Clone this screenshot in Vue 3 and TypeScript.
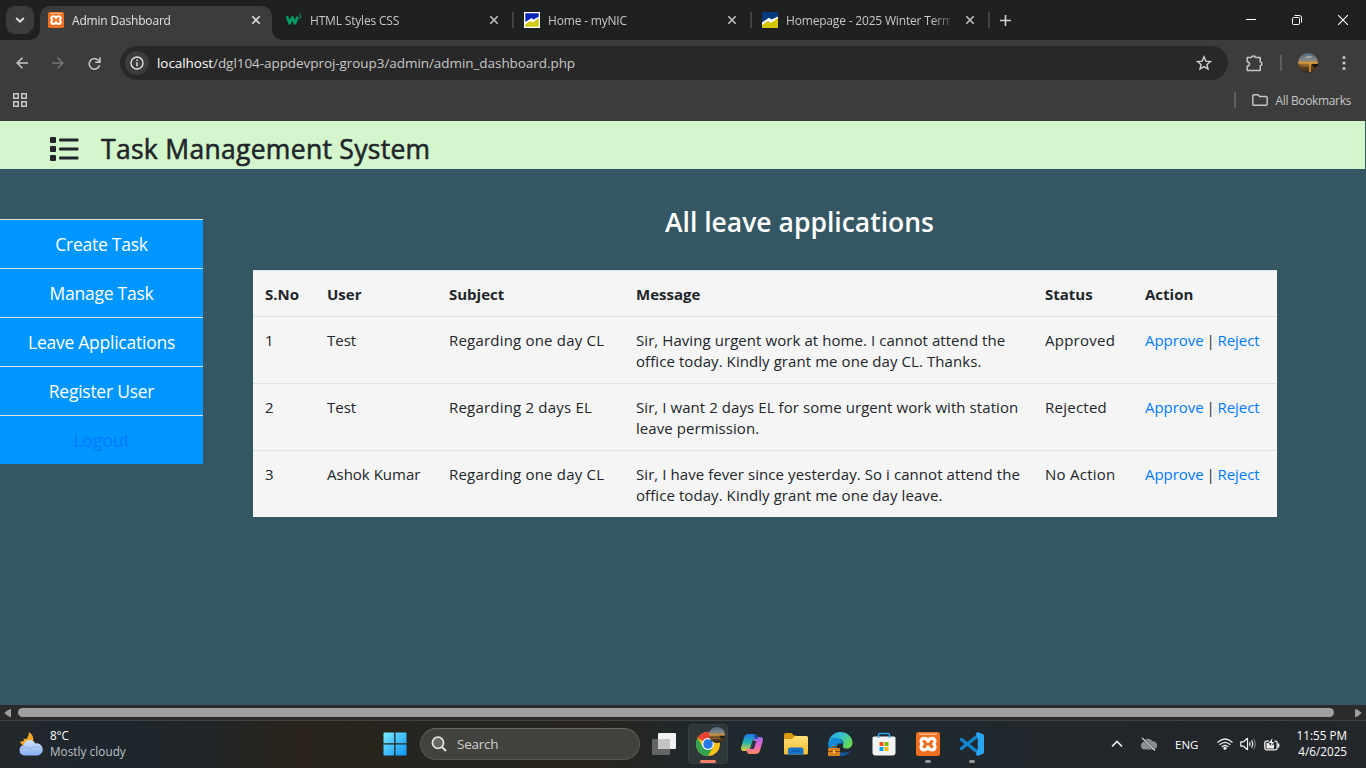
<script setup lang="ts">
interface Tab { title: string; icon: 'xampp' | 'w3' | 'nic' | 'nic2'; active?: boolean }
interface Leave { no: number; user: string; subject: string; message: string; status: string }

const tabs: Tab[] = [
  { title: 'Admin Dashboard', icon: 'xampp', active: true },
  { title: 'HTML Styles CSS', icon: 'w3' },
  { title: 'Home - myNIC', icon: 'nic' },
  { title: 'Homepage - 2025 Winter Term', icon: 'nic2' },
]

const menu: string[] = ['Create Task', 'Manage Task', 'Leave Applications', 'Register User', 'Logout']
const columns: string[] = ['S.No', 'User', 'Subject', 'Message', 'Status', 'Action']

const leaves: Leave[] = [
  { no: 1, user: 'Test', subject: 'Regarding one day CL', message: 'Sir, Having urgent work at home. I cannot attend the\noffice today. Kindly grant me one day CL. Thanks.', status: 'Approved' },
  { no: 2, user: 'Test', subject: 'Regarding 2 days EL', message: 'Sir, I want 2 days EL for some urgent work with station\nleave permission.', status: 'Rejected' },
  { no: 3, user: 'Ashok Kumar', subject: 'Regarding one day CL', message: 'Sir, I have fever since yesterday. So i cannot attend the\noffice today. Kindly grant me one day leave.', status: 'No Action' },
]
</script>

<template>
  <div class="screen">
    <svg class="defs" width="0" height="0" aria-hidden="true">
      <defs>
        <linearGradient id="sky" x1="0" y1="0" x2="0" y2="1">
          <stop offset="0" stop-color="#4d6784" /><stop offset=".38" stop-color="#8b8a80" />
          <stop offset=".5" stop-color="#c98f3e" /><stop offset=".62" stop-color="#6b4a22" />
          <stop offset="1" stop-color="#33291f" />
        </linearGradient>
        <linearGradient id="win" x1="0" y1="0" x2="1" y2="1">
          <stop offset="0" stop-color="#7cebff" /><stop offset="1" stop-color="#0a94f5" />
        </linearGradient>
        <linearGradient id="cloud" x1="0" y1="0" x2="0" y2="1">
          <stop offset="0" stop-color="#d3e4fb" /><stop offset="1" stop-color="#86aef0" />
        </linearGradient>
        <linearGradient id="copA" x1="0" y1="0" x2="0" y2="1">
          <stop offset="0" stop-color="#1b78e8" /><stop offset=".5" stop-color="#25b5b0" /><stop offset="1" stop-color="#e5d22f" />
        </linearGradient>
        <linearGradient id="copB" x1="0" y1="0" x2="0" y2="1">
          <stop offset="0" stop-color="#9b6cf0" /><stop offset=".5" stop-color="#e565c4" /><stop offset="1" stop-color="#ff8a5c" />
        </linearGradient>
        <linearGradient id="folder" x1="0" y1="0" x2="0" y2="1">
          <stop offset="0" stop-color="#ffdf7a" /><stop offset="1" stop-color="#f8bd2c" />
        </linearGradient>
        <linearGradient id="edge" x1="0" y1="0" x2="1" y2=".5">
          <stop offset="0" stop-color="#1b9fe2" /><stop offset=".5" stop-color="#35c1d4" /><stop offset="1" stop-color="#62d957" />
        </linearGradient>
        <symbol id="i-xampp" viewBox="0 0 24 24">
          <rect width="24" height="24" rx="2.500" fill="#ee6f1d" />
          <path d="M3 2.200h18" stroke="#f9b184" stroke-width="1.600" />
          <path d="M12 9.300C11 5.400 5 5.400 5 9.200c0 1.600.5 2.100 1.300 2.800C5.500 12.700 5 13.300 5 14.900c0 3.900 6 3.900 7 0 1 3.900 7 3.900 7 0 0-1.600-.5-2.200-1.300-2.900.8-.7 1.300-1.200 1.300-2.800 0-3.800-6-3.800-7 .1z" fill="none" stroke="#fff" stroke-width="3.100" stroke-linejoin="round" />
        </symbol>
      </defs>
    </svg>

    <div class="tabstrip">
      <div class="tabsearch">
        <svg width="10" height="6" viewBox="0 0 10 6"><path d="M1.200 1 5 4.700 8.800 1" fill="none" stroke="#e3e3e3" stroke-width="1.900" /></svg>
      </div>
      <div v-for="t in tabs" :key="t.title" class="tab" :class="{ active: t.active, divided: t.icon === 'nic' || t.icon === 'nic2' }">
        <svg v-if="t.icon === 'xampp'" class="fav" viewBox="0 0 24 24"><use href="#i-xampp" /></svg>
        <svg v-else-if="t.icon === 'w3'" class="fav" viewBox="0 0 16 16">
          <path d="M.8 4.200 3.600 11.300 6.300 5.400 9 11.300 11.700 4.800" fill="none" stroke="#059862" stroke-width="2.800" stroke-linejoin="round" />
          <path d="M12.800 2.700H15L13.900 4.200q1.400.2 1.100 1.300-.6 1-2.200.5" fill="none" stroke="#059862" stroke-width=".8" />
        </svg>
        <svg v-else class="fav" viewBox="0 0 16 16">
          <rect width="16" height="16" fill="#fff" />
          <template v-if="t.icon === 'nic'">
            <path d="M1.300 1.300h13.400v3.500L9.500 7.500 7.500 6 1.300 10z" fill="#0524b8" />
            <path d="M1.300 14.700V12.500L6 9l3 1.500L14.700 6v8.700z" fill="#cccc14" />
          </template>
          <template v-else>
            <path d="M0 0h16v4.500L9.500 7.500 7 5.800 0 10.500z" fill="#073b80" />
            <path d="M0 16v-3L6 9l3 2 7-5v10z" fill="#d3c600" />
          </template>
        </svg>
        <span class="tab-title">{{ t.title }}</span>
        <svg class="close" width="10" height="10" viewBox="0 0 10 10"><path d="M1.300 1.300l7.400 7.400M8.700 1.300 1.300 8.700" stroke="#dcdcdc" stroke-width="1.600" /></svg>
      </div>
      <div class="newtab">
        <svg width="11" height="11" viewBox="0 0 11 11"><path d="M5.500 0v11M0 5.500h11" stroke="#d0d0d0" stroke-width="1.600" /></svg>
      </div>
      <div class="winbtns">
        <svg width="10" height="10" viewBox="0 0 10 10"><path d="M0 4.500h10" stroke="#fff" /></svg>
        <svg width="10" height="10" viewBox="0 0 10 10"><rect x=".5" y="2.500" width="7" height="7" rx="1" fill="none" stroke="#fff" /><path d="M2.500.5H7.500a2 2 0 0 1 2 2V7.500" fill="none" stroke="#fff" /></svg>
        <svg width="10" height="10" viewBox="0 0 10 10"><path d="M0 0l10 10M10 0 0 10" stroke="#fff" stroke-width="1.100" /></svg>
      </div>
    </div>

    <div class="toolbar">
      <svg class="nav" width="12" height="12" viewBox="0 0 12 12"><path d="M12 6H1.200M6.400.8 1.200 6l5.200 5.200" fill="none" stroke="#c7c7c7" stroke-width="1.600" /></svg>
      <svg class="nav" width="12" height="12" viewBox="0 0 12 12"><path d="M0 6h10.800M5.600.8 10.800 6l-5.200 5.200" fill="none" stroke="#767676" stroke-width="1.600" /></svg>
      <svg class="nav reload" width="13" height="13" viewBox="0 0 13 13"><path d="M11.300 4.600A5.300 5.300 0 1 0 11.600 8.300" fill="none" stroke="#c7c7c7" stroke-width="1.600" /><path d="M12 .4v4.800H7.200" fill="none" stroke="#c7c7c7" stroke-width="1.600" /></svg>
      <div class="omnibox">
        <div class="info">
          <svg width="14" height="14" viewBox="0 0 14 14"><circle cx="7" cy="7" r="6" fill="none" stroke="#e0e0e0" stroke-width="1.400" /><path d="M7 6.200v4M7 3.600v1.400" stroke="#e0e0e0" stroke-width="1.500" /></svg>
        </div>
        <span class="url"><b>localhost</b>/dgl104-appdevproj-group3/admin/admin_dashboard.php</span>
        <svg class="star" width="16" height="16" viewBox="0 0 16 16"><path d="M8 1.800l1.800 4.300 4.700.4-3.600 3 1.100 4.600L8 11.600l-4 2.500 1.100-4.600-3.600-3 4.700-.4z" fill="none" stroke="#d0d0d0" stroke-width="1.400" /></svg>
      </div>
      <svg class="puzzle" width="17" height="17" viewBox="0 0 17 17"><path d="M1.200 2.500H5.500Q5.700 1 7.500 1T9.500 2.500H14.200V7q1.800.2 1.800 1.900T14.200 10.800V15.500H1.200V11.300Q3.500 11 3.500 9T1.200 6.700z" fill="none" stroke="#c7c7c7" stroke-width="1.500" stroke-linejoin="round" /></svg>
      <i class="bar"></i>
      <svg class="avatar" width="20" height="20" viewBox="0 0 20 20"><circle cx="10" cy="10" r="10" fill="url(#sky)" /><path d="M6 4.500l5-2 4 1-4 2z" fill="#b4b8ba" opacity=".7" /><path d="M1 9.500h18v.8H1z" fill="#eea33e" /><path d="M3 12.500h8v.7H3z" fill="#c98a35" /><path d="M12 10v9" stroke="#f0a233" stroke-width="1.400" /><path d="M13.500 11H20v2l-4 2z" fill="#171714" /></svg>
      <svg class="dots" width="4" height="16" viewBox="0 0 4 16"><g fill="#c7c7c7"><circle cx="2" cy="2.500" r="1.600" /><circle cx="2" cy="8" r="1.600" /><circle cx="2" cy="13.500" r="1.600" /></g></svg>
    </div>

    <div class="bookmarks">
      <svg width="14" height="14" viewBox="0 0 14 14"><g fill="none" stroke="#c7c7c7" stroke-width="1.500"><rect x=".75" y=".75" width="4.500" height="4.500" /><rect x="8.750" y=".75" width="4.500" height="4.500" /><rect x=".75" y="8.750" width="4.500" height="4.500" /><rect x="8.750" y="8.750" width="4.500" height="4.500" /></g></svg>
      <i class="bar"></i>
      <svg width="16" height="12" viewBox="0 0 16 12"><path d="M.8 10V2Q.8.7 2 .7H6L7.700 2.500H14q1.200 0 1.200 1.200V10q0 1.300-1.200 1.300H2Q.8 11.300.8 10z" fill="none" stroke="#c7c7c7" stroke-width="1.400" /></svg>
      <span>All Bookmarks</span>
    </div>

    <main class="page">
      <header class="banner">
        <svg width="29" height="24" viewBox="0 0 29 24"><g fill="#212529"><rect y="0" width="6" height="6" rx="1" /><rect y="9" width="6" height="6" rx="1" /><rect y="18" width="6" height="6" rx="1" /><rect x="9" y="1.500" width="19.500" height="3" rx="1" /><rect x="9" y="10.500" width="19.500" height="3" rx="1" /><rect x="9" y="19.500" width="19.500" height="3" rx="1" /></g></svg>
        <h3>Task Management System</h3>
      </header>
      <div class="body">
        <nav class="sidebar">
          <a v-for="m in menu" :key="m" :class="{ logout: m === 'Logout' }">{{ m }}</a>
        </nav>
        <section class="content">
          <h3>All leave applications</h3>
          <table>
            <colgroup><col v-for="(c, i) in columns" :key="c" :class="'c' + i" /></colgroup>
            <thead><tr><th v-for="c in columns" :key="c">{{ c }}</th></tr></thead>
            <tbody>
              <tr v-for="l in leaves" :key="l.no">
                <td>{{ l.no }}</td><td>{{ l.user }}</td><td class="subject">{{ l.subject }}</td>
                <td class="message">{{ l.message }}</td><td class="status">{{ l.status }}</td>
                <td class="actions"><a>Approve</a> | <a>Reject</a></td>
              </tr>
            </tbody>
          </table>
        </section>
      </div>
    </main>

    <div class="hscroll">
      <svg width="8" height="10" viewBox="0 0 8 10"><path d="M7 .8v8.400Q3 8 .3 5 3 2 7 .8z" fill="#9f9f9f" /></svg>
      <div class="thumb"></div>
      <svg width="8" height="10" viewBox="0 0 8 10"><path d="M1 .8v8.400Q5 8 7.700 5 5 2 1 .8z" fill="#9f9f9f" /></svg>
    </div>

    <footer class="taskbar">
      <div class="weather">
        <svg width="26" height="26" viewBox="0 0 26 26"><path d="M11 1q5.500 3.500 4 9.500L8 15Q3.500 14.500 1.500 10.500 4 11 6 9.500L5.500 7.500 8.500 8Q11 5 11 1z" fill="#f5a623" /><path d="M6.500 24.500a5.300 5.300 0 0 1-.6-10.500 6 6 0 0 1 11.400-1.500A6 6 0 0 1 20 24.500z" fill="url(#cloud)" /><path d="M3 18q6-4 10 0 4-4 10-1" fill="none" stroke="#6d9be8" stroke-width=".8" opacity=".6" /></svg>
        <div><b>8°C</b><span>Mostly cloudy</span></div>
      </div>
      <div class="apps">
        <svg class="start" width="24" height="24" viewBox="0 0 24 24"><path d="M1.500.5H11.200V11.200H.5V1.500q0-1 1-1zM12.500.5h10q1 0 1 1v9.700H12.500zM.5 12.500H11.200V23.500H1.500q-1 0-1-1zM12.500 12.500h11v10q0 1-1 1H12.500z" fill="url(#win)" /></svg>
        <div class="search">
          <svg width="16" height="16" viewBox="0 0 16 16"><circle cx="7" cy="6.800" r="5.600" fill="#666762" stroke="#e4e4e4" stroke-width="1.700" /><path d="M11 11l4 4" stroke="#e4e4e4" stroke-width="1.900" /></svg>
          <span>Search</span>
        </div>
        <div class="app"><svg width="24" height="22" viewBox="0 0 24 22"><rect x="6" width="18" height="16" rx="1" fill="#f1f1f1" /><rect y="6" width="18" height="16" rx="1" fill="#767676" opacity=".8" /><path d="M6 6h12v10H6z" fill="#c4c4c4" /></svg></div>
        <div class="app current">
          <svg class="chrome" width="24" height="24" viewBox="0 0 24 24"><circle cx="12" cy="12" r="12" fill="#fbc116" /><path d="M12 12 1.600 6A12 12 0 0 1 22.400 6H12z" fill="#e94235" /><path d="M1.600 6A12 12 0 0 0 12 24l5.200-9L12 12 7 15z" fill="#32a350" /><path d="M12 6.200h10.500" stroke="#e94235" stroke-width="1" /><circle cx="12" cy="12" r="6" fill="#fff" /><circle cx="12" cy="12" r="4.800" fill="#2b78eb" /></svg>
          <svg class="mini" width="16" height="16" viewBox="0 0 20 20"><circle cx="10" cy="10" r="10" fill="url(#sky)" /><path d="M1 9.500h18v.8H1z" fill="#d99a42" /><path d="M2 14h12v1H2z" fill="#9a7037" /><path d="M13 11h7v2l-4 2z" fill="#1d1b17" /></svg>
          <i></i>
        </div>
        <div class="app"><svg width="24" height="24" viewBox="0 0 24 24"><path d="M8.500 2h6Q16.500 2 17.200 4.500L18 7h-2.500Q13 7 12 10l-2.200 7.500Q9.300 19 7.500 19H3.500Q.4 19 1.200 15L4 5.500Q5 2 8.500 2z" fill="url(#copA)" /><path d="M15.500 22h-6Q7.500 22 6.800 19.500L6 17h2.500Q11 17 12 14l2.200-7.500Q14.700 5 16.500 5H20.500q3.100 0 2.300 4L20 18.500Q19 22 15.500 22z" fill="url(#copB)" /><path d="M14.500 2Q16.500 2 17.200 4.500L18 7H15l-1-3z" fill="#1c48b5" /><path d="M13.400 9h3l-2 6.500q-.4 1.500-1.800 1.500h-3Q11.200 16.500 12 14z" fill="#263343" /></svg></div>
        <div class="app"><svg width="24" height="22" viewBox="0 0 24 22"><path d="M0 2Q0 0 2 0H7.500L10 2.500H12V8H0z" fill="#d9980d" /><path d="M0 6H8L11 3H22.500Q24 3 24 4.500V20q0 1.500-1.500 1.500H1.500Q0 21.500 0 20z" fill="url(#folder)" /><path d="M4 21.500V17q0-2.500 2.500-2.500H17q2.500 0 2.500 2.500v4.500z" fill="#1673ca" /><path d="M7.500 18h8.500" stroke="#0e5ca8" stroke-width="1.500" /></svg></div>
        <div class="app"><svg width="25" height="24" viewBox="0 0 25 24"><path d="M.3 13A12 12 0 0 1 12.300 0C19 0 24.500 5 24.500 10.500c0 4-2.500 6-5.500 6-3.500 0-5-1.500-4-3.500C17 8.500 12 6 8 7.500 3 9 1 12 .3 13z" fill="url(#edge)" /><path d="M.3 12C1.500 6.500 6 5 9.500 6c4 .8 6 4 5 6.500-1.500-2-5-1.500-5.800 1.500C8 18 11 21 15 21.500L12 24C5 24 0 19 .3 12z" fill="#1289d6" /><path d="M9 12.500c-2 5.500 3.500 11 13.500 6.500-3 4-7.500 5.500-11.500 4.800C6.500 22 5.500 16.500 9 12.500z" fill="#115aa8" /><rect y="16" width="12" height="8" rx="1" fill="#d9821b" /><path d="M4 16v-1.500h4V16M0 19.500h12" stroke="#8a4508" fill="none" /><rect x="5" y="18.500" width="2" height="2.500" fill="#ffd15c" /></svg></div>
        <div class="app"><svg width="24" height="24" viewBox="0 0 24 24"><path d="M6.500 6V3q0-1.500 1.500-1.500h8q1.500 0 1.500 1.500v3" fill="none" stroke="#28a5e6" stroke-width="1.500" /><path d="M.5 6Q.5 4.500 2 4.500H22q1.500 0 1.500 1.500V20.500q0 3-3 3H3.500q-3 0-3-3z" fill="#f3f3f3" /><path d="M6.500 4.500V6M17.500 4.500V6" stroke="#28a5e6" stroke-width="1.500" /><path d="M7.500 10H11.500v4H7.500z" fill="#f25022" /><path d="M12.500 10H16.500v4H12.500z" fill="#7fba00" /><path d="M7.500 15H11.500v4H7.500z" fill="#00a4ef" /><path d="M12.500 15H16.500v4H12.500z" fill="#ffb900" /></svg></div>
        <div class="app open"><svg width="24" height="24" viewBox="0 0 24 24"><use href="#i-xampp" /></svg><i></i></div>
        <div class="app open"><svg width="24" height="24" viewBox="0 0 24 24"><path d="M1.500 7.500 17.500 20M1.500 16.500 17.500 4" stroke="#1384cf" stroke-width="3.300" stroke-linecap="round" /><path d="M17.500 0 24 2.700V21.300L17.500 24 16 22.500l1.500-5V6.500L16 1.500z" fill="#2aa4f4" /><path d="M17.500 6.500v11L10.500 12z" fill="#22282e" /></svg><i></i></div>
      </div>
      <div class="tray">
        <svg class="up" width="12" height="8" viewBox="0 0 12 8"><path d="M1 6.500 6 1.500l5 5" fill="none" stroke="#f2f2f2" stroke-width="1.600" /></svg>
        <svg class="onedrive" width="17" height="14" viewBox="0 0 17 14"><path d="M4 12.500A4 4 0 0 1 3.500 4.800 5 5 0 0 1 12.500 4.300 4.100 4.100 0 0 1 13.500 12.500z" fill="#8b8d8f" /><path d="M2 .8 15 13.500" stroke="#23272b" stroke-width="2" /><path d="M2 .8 15 13.500" stroke="#e8e8e8" stroke-width="1.100" /></svg>
        <span class="lang">ENG</span>
        <svg class="wifi" width="16" height="12" viewBox="0 0 16 12"><g fill="none" stroke="#f2f2f2" stroke-width="1.200"><path d="M.5 4.500Q8-2.500 15.500 4.500M2.600 6.800Q8 1.800 13.400 6.800M4.800 9Q8 6 11.200 9" /></g><circle cx="8" cy="10.300" r="1.500" fill="#f2f2f2" /></svg>
        <svg class="sound" width="17" height="14" viewBox="0 0 17 14"><path d="M.8 4.800H3.500L7.500 1.300v11.400L3.500 9.200H.8z" fill="none" stroke="#f2f2f2" stroke-width="1.200" stroke-linejoin="round" /><path d="M9.500 5q1.200 2 0 4M11.500 3.300q2.400 3.700 0 7.400" fill="none" stroke="#f2f2f2" stroke-width="1.200" /><path d="M13.500 1.500q3.600 5.500 0 11" fill="none" stroke="#77797b" stroke-width="1.200" /></svg>
        <svg class="battery" width="16" height="13" viewBox="0 0 16 13"><path d="M5 3.200H2.500Q.8 3.200.8 5v5q0 1.800 1.700 1.800h9Q13.200 11.800 13.200 10V5q0-1.800-1.700-1.800H10.500M14.700 5.500v4" fill="none" stroke="#f2f2f2" stroke-width="1.300" /><path d="M2.500 5H5l1 2.500h2L10 6v4.500H2.500z" fill="#f2f2f2" /><path d="M8.500 0 4.700 5h2.800L6 9l4.300-5H7.800z" fill="#f2f2f2" /></svg>
        <div class="clock"><span>11:55 PM</span><span>4/6/2025</span></div>
      </div>
    </footer>
  </div>
</template>

<style>
html, body { margin: 0; overflow: hidden; background: #202120; }
</style>

<style scoped>
* { box-sizing: border-box; }
.screen { width: 1366px; height: 768px; display: flex; flex-direction: column; overflow: hidden; font-family: "Open Sans", "Noto Sans", sans-serif; white-space: nowrap; background: #3c3c3c; }
svg { display: block; flex: none; }
.defs { position: absolute; }

.tabstrip { height: 40px; flex: none; display: flex; background: #1f2120; padding-left: 6px; }
.tabsearch { width: 28px; height: 28px; margin: 6px 6px 0 0; border-radius: 9px; background: #3c3c3c; display: flex; align-items: center; justify-content: center; }
.tab { width: 238px; height: 34px; margin-top: 6px; padding: 0 11px 6px 14px; display: flex; align-items: center; position: relative; font-size: 12px; color: #c7c7c7; }
.tab.active { width: 232px; padding: 0 11px 6px 8px; background: #3c3c3c; border-radius: 10px 10px 0 0; color: #e3e3e3; }
.tab.active::before, .tab.active::after { content: ""; position: absolute; bottom: 0; width: 10px; height: 10px; }
.tab.active::before { left: -10px; background: radial-gradient(circle at 0 0, #1f2120 9.500px, #3c3c3c 10px); }
.tab.active::after { right: -10px; background: radial-gradient(circle at 100% 0, #1f2120 9.500px, #3c3c3c 10px); }
.tab.divided::before { content: ""; position: absolute; left: 2px; top: 6px; width: 2px; height: 16px; background: #414241; }
.fav { width: 16px; height: 16px; margin-right: 8px; }
.tab-title { flex: 1; min-width: 0; letter-spacing: -0.18px; mask-image: linear-gradient(90deg, #000 146px, transparent 170px); }
.close { margin-left: 14px; margin-right: 1px; }
.tab:not(.active) .close { opacity: .85; margin-right: 0; margin-left: 15px; }
.tab.active .close { margin-right: 0; }
.newtab { width: 60px; display: flex; align-items: center; position: relative; padding-left: 14px; }
.newtab::before { content: ""; position: absolute; left: 2px; top: 12px; width: 2px; height: 16px; background: #414241; }
.winbtns { margin-left: auto; padding-right: 18px; display: flex; align-items: center; gap: 36px; }

.toolbar { height: 46px; flex: none; display: flex; align-items: center; padding-left: 16px; background: #3c3c3c; }
.nav { margin-right: 24px; }
.nav.reload { margin-right: 19px; }
.omnibox { width: 1108px; height: 34px; border-radius: 17px; background: #282828; display: flex; align-items: center; padding: 0 16px 0 5px; }
.info { width: 24px; height: 24px; border-radius: 12px; background: #3c3c3c; display: flex; align-items: center; justify-content: center; }
.url { margin-left: 8px; font-size: 13.500px; letter-spacing: -0.06px; color: #c7c7c7; flex: 1; }
.url b { font-weight: 400; color: #fff; }
.puzzle { margin-left: 18px; }
.bar { width: 2px; height: 16px; background: #5e5e5e; }
.toolbar .bar { margin-left: 17px; }
.avatar { margin-left: 16px; }
.dots { margin-left: 24px; }

.bookmarks { height: 35px; flex: none; display: flex; align-items: center; padding: 0 15px 7px 13px; color: #c7c7c7; font-size: 12px; background: #3c3c3c; }
.bookmarks .bar { margin: 0 16px 0 auto; }
.bookmarks span { margin-left: 8px; letter-spacing: -0.35px; }

.page { height: 584px; flex: none; background: #355764; color: #212529; }
.banner { width: 1365px; height: 48px; display: flex; align-items: center; padding: 7px 0 0 50px; background: #d3f6cc; }
.banner h3 { margin: 2px 0 0 22px; font-size: 26.500px; line-height: 33px; font-weight: 400; letter-spacing: 0.3px; -webkit-text-stroke: 0.550px #212529; }
.body { display: flex; }
.sidebar { width: 203px; margin-top: 50px; background: #0096ff; height: 245px; }
.sidebar a { display: block; height: 49px; border-top: 1px solid #dee2e6; text-align: center; line-height: 49px; font-size: 17.500px; letter-spacing: -0.25px; color: #fff; }
.sidebar a.logout { color: #007bff; letter-spacing: 0; }
.content { width: 1024px; margin-left: 50px; padding-top: 36px; }
.content h3 { margin: 0 0 31px; padding-left: 69px; text-align: center; color: #fff; font-size: 26.500px; line-height: 34px; font-weight: 600; }
table { width: 1024px; table-layout: fixed; border-collapse: separate; border-spacing: 0; background: #f5f5f5; font-size: 15px; line-height: 21px; }
.c0 { width: 62px; } .c1 { width: 122px; } .c2 { width: 187px; } .c3 { width: 409px; } .c4 { width: 100px; } .c5 { width: 144px; }
th, td { border-top: 1px solid #dee2e6; padding: 13px 0 11px 12px; text-align: left; vertical-align: top; }
.subject { letter-spacing: 0.2px; }
.status { letter-spacing: 0.25px; }
.message { white-space: pre-line; letter-spacing: 0.070px; }
.actions { word-spacing: -1px; letter-spacing: -0.05px; }
.actions a { color: #007bff; }

.hscroll { height: 15px; flex: none; display: flex; align-items: center; justify-content: space-between; padding: 0 4px; background: #2b2b2b; }
.thumb { width: 1316px; height: 9px; border-radius: 5px; background: #9f9f9f; margin: 0 14px 0 0; }

.taskbar { height: 48px; flex: none; display: flex; align-items: center; position: relative; padding-bottom: 1px; border-top: 1px solid #414344; background: linear-gradient(90deg, #23272b 0, #1e272e 90px, #202528 200px, #2a241b 300px, #26251f 420px, #27251e 600px, #20282c 690px, #1f292f 850px, #22272b 1100px, #23262a 1366px); }
.weather { width: 382px; display: flex; align-items: center; padding-left: 18px; color: #fff; font-size: 11.700px; line-height: 16px; }
.weather div { margin: -2px 0 0 6px; display: flex; flex-direction: column; }
.weather b { font-weight: 400; letter-spacing: -0.1px; }
.weather span { color: #bfc2c4; letter-spacing: 0.07px; }
.apps { display: flex; align-items: center; }
.start { margin: 0 13px 0 1px; }
.search { width: 220px; height: 32px; border-radius: 16px; background: #42433f; border: 1px solid #555651; border-top-color: #666763; display: flex; align-items: center; padding: 0 0 1px 10px; margin-right: 2px; color: #cfcfcd; font-size: 13.500px; letter-spacing: -0.25px; }
.search span { margin-left: 10px; }
.app { width: 40px; height: 40px; margin: 0 2px; position: relative; display: flex; align-items: center; justify-content: center; border-radius: 4px; }
.app.current { background: #30373a; border: 1px solid #383f42; }
.mini { position: absolute; left: 20px; top: 2px; }
.app i { position: absolute; bottom: 1px; left: 17px; width: 6px; height: 3px; border-radius: 2px; background: #94989a; }
.app.current i { left: 11px; width: 16px; bottom: 0; background: #f47f68; }
.tray { margin-left: auto; display: flex; align-items: center; color: #fff; padding-right: 19px; }
.onedrive { margin-left: 17px; }
.lang { margin-left: 18px; font-size: 11.500px; width: 26px; }
.wifi { margin-left: 16px; }
.sound { margin-left: 7px; }
.battery { margin-left: 7px; }
.clock { width: 67px; display: flex; flex-direction: column; align-items: flex-end; font-size: 11.700px; line-height: 16px; margin-top: -2px; }
</style>
